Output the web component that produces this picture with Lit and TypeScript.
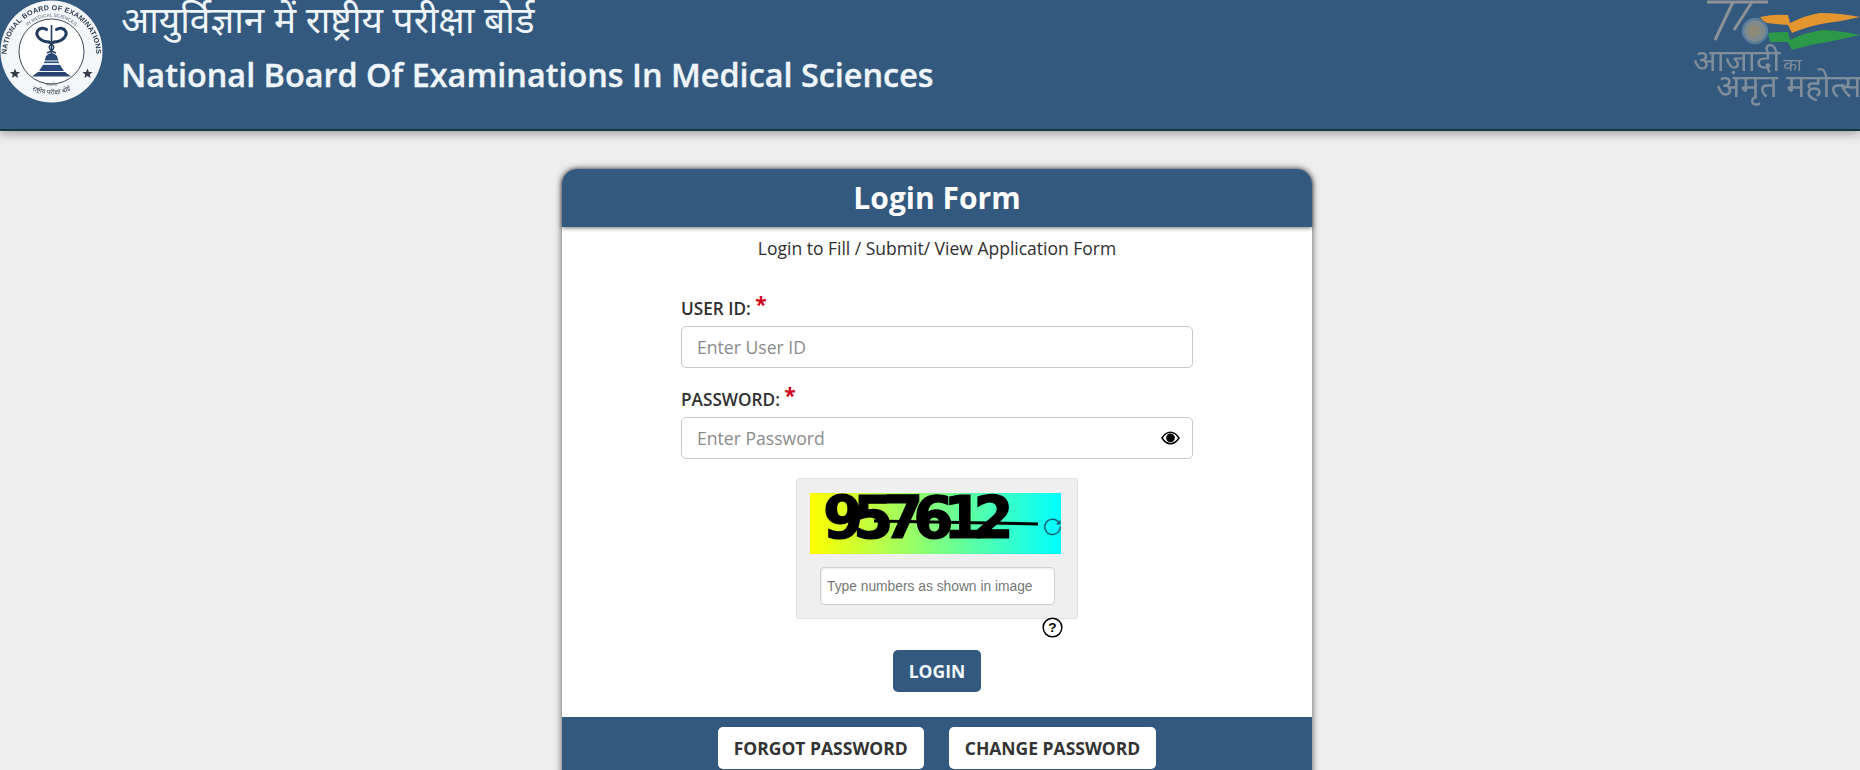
import { LitElement, html, css, svg } from "lit";
import { customElement } from "lit/decorators.js";

const emblem = svg`
<svg class="emblem" viewBox="0 0 104 104" width="104" height="104" aria-hidden="true">
  <defs>
    <path id="arcTop" d="M7 60 A44.8 44.8 0 1 1 96 60"/>
    <path id="arcMid" d="M17.5 42 A35.5 35.5 0 0 1 85.5 42"/>
    <path id="arcBot" d="M19 80 A43.6 43.6 0 0 0 84 80"/>
  </defs>
  <circle cx="51.5" cy="51.5" r="51" fill="#f4f7fa"/>
  <circle cx="51.5" cy="51.5" r="32.5" fill="#fff" stroke="#3c4654" stroke-width="1"/>
  <text font-family="'Liberation Sans',sans-serif" font-size="7.1" font-weight="700" fill="#2c3a4e" letter-spacing=".25"><textPath href="#arcTop" startOffset="50%" text-anchor="middle">NATIONAL BOARD OF EXAMINATIONS</textPath></text>
  <text font-family="'Liberation Sans',sans-serif" font-size="4.7" fill="#5a6575"><textPath href="#arcMid" startOffset="50%" text-anchor="middle">IN MEDICAL SCIENCES</textPath></text>
  <text font-family="'Noto Sans Devanagari','Noto Sans',sans-serif" font-size="6.5" fill="#333d4a"><textPath href="#arcBot" startOffset="50%" text-anchor="middle">राष्ट्रीय परीक्षा बोर्ड</textPath></text>
  <text x="51.5" y="86" text-anchor="middle" font-family="'Noto Sans Devanagari','Noto Sans',sans-serif" font-size="4" fill="#666">सत्यमेव</text>
  <path d="M15 68.5l1.4 3.4 3.7.2-2.9 2.3 1 3.6-3.2-2-3.2 2 1-3.6-2.9-2.3 3.7-.2z" fill="#343c48"/>
  <path d="M87.5 68.5l1.4 3.4 3.7.2-2.9 2.3 1 3.6-3.2-2-3.2 2 1-3.6-2.9-2.3 3.7-.2z" fill="#343c48"/>
  <path d="M49.5 42 C41 42 35 36 37.5 31 C39.5 27.5 44 27.5 46.5 29.5 M53.5 42 C62 42 68 36 65.5 31 C63.5 27.5 59 27.5 56.5 29.5" fill="none" stroke="#223c60" stroke-width="3" stroke-linecap="round"/>
  <path d="M51.5 25 V56" stroke="#223c60" stroke-width="1.6"/>
  <path d="M47 42 C56 45 56 49 47 53 M56 42 C47 45 47 49 56 53" fill="none" stroke="#28405f" stroke-width="1.5"/>
  <path d="M46 56 Q51.5 50 57 56 L59 63 H44 Z" fill="#2b4a7c"/>
  <path d="M44 61 H59" stroke="#f4f7fa" stroke-width="1"/>
  <path d="M44 63 H59 L63 70 H40 Z" fill="#dfe6ef"/>
  <path d="M43 65 H60 L64 71 H39 Z" fill="#294a7d"/>
  <path d="M38 72 H65 L71 76.5 H32 Z" fill="#2a4470"/>
</svg>`;

const azadi = svg`
<svg class="azadi" viewBox="0 0 172 110" width="172" height="110" aria-hidden="true">
  <path d="M19 2 H80 M45 2 L27 40 M64 2 L46 30" fill="none" stroke="#8d9296" stroke-width="3"/>
  <circle cx="67" cy="31" r="12" fill="#7f8a8c" stroke="#5a7d9c" stroke-width="2.5"/>
  <circle cx="66" cy="31" r="6" fill="#8f8a78"/>
  <path d="M72 17 Q86 14 100 15 L102 23 Q118 15 132 13 Q152 13 172 17 Q155 21 139 23 Q120 26 104 33 L100 25 Q88 24 79 23 Q75 21 72 17 Z" fill="#e3962f"/>
  <path d="M80 33 Q90 32 100 32 L102 40 Q118 32 135 30 Q155 31 172 35 Q155 39 139 42 Q120 45 104 50 L100 42 Q90 42 82 42 Z" fill="#2b9947"/>
  <text x="5" y="71" font-family="'Noto Sans Devanagari','Noto Sans',sans-serif" font-size="31" fill="#808e9b">आज़ादी<tspan font-size="18" dx="3">का</tspan></text>
  <text x="28" y="97" font-family="'Noto Sans Devanagari','Noto Sans',sans-serif" font-size="32" fill="#808e9b">अमृत महोत्सव</text>
</svg>`;

const eye = svg`
<svg viewBox="0 0 20 14" width="19" height="14" aria-hidden="true">
  <path d="M1 7 C4 2.5 7 1 10 1 S16 2.5 19 7 C16 11.5 13 13 10 13 S4 11.5 1 7 Z" fill="#fff" stroke="#000" stroke-width="1.5"/>
  <circle cx="10" cy="6.8" r="4.6" fill="#000"/>
</svg>`;

const refresh = svg`
<svg viewBox="0 0 18 18" width="19" height="19" aria-hidden="true">
  <path d="M15.5 6 A7.3 7.3 0 1 0 16.3 9" fill="none" stroke="#1d5f75" stroke-width="1.4"/>
  <path d="M16.6 2.5 L16.6 7.2 L12 7.2 Z" fill="#1d5f75"/>
</svg>`;

const help = svg`
<svg viewBox="0 0 20 20" width="21" height="21" aria-hidden="true">
  <circle cx="10" cy="10" r="8.9" fill="#fff" stroke="#000" stroke-width="1.4"/>
  <text x="10" y="14.6" text-anchor="middle" font-family="'Liberation Sans',sans-serif" font-size="13" font-weight="700" fill="#000">?</text>
</svg>`;

@customElement("app-root")
export class AppRoot extends LitElement {
  static styles = css`
    :host {
      display: block;
      height: 770px;
      overflow: hidden;
      background: #eeeeee;
      font-family: "Open Sans", "Noto Sans", sans-serif;
      color: #2f2f2f;
    }
    .top {
      display: flex;
      height: 129px;
      background: #34597f;
      border-bottom: 2px solid #143a3f;
      box-shadow: 0 3px 9px rgba(0, 0, 0, 0.32);
      overflow: hidden;
    }
    .emblem { flex: none; filter: blur(0.4px); }
    .names {
      flex: 1;
      margin: -2px 0 0 17px;
      color: #eef6fb;
    }
    .hi {
      font-family: "Noto Sans Devanagari", "Noto Sans", sans-serif;
      font-size: 37px;
      line-height: 52px;
      white-space: nowrap;
    }
    .en {
      font-size: 32.4px;
      line-height: 46px;
      font-weight: 600;
      margin-top: 1px;
      white-space: nowrap;
      -webkit-text-stroke: 0.35px #eef6fb;
    }
    .azadi { flex: none; filter: blur(0.5px); }
    .wrap {
      display: flex;
      justify-content: center;
      padding: 38px 0 0 14px;
    }
    .card {
      width: 750px;
      background: #fff;
      border-radius: 15px 15px 0 0;
      box-shadow: 0 0 7px rgba(0, 0, 0, 0.65);
    }
    .card-head {
      height: 58px;
      background: #34597f;
      border-radius: 15px 15px 0 0;
      box-shadow: 0 1px 4px rgba(0, 0, 0, 0.55);
      color: #fff;
      font-size: 30px;
      font-weight: 700;
      line-height: 58px;
      text-align: center;
    }
    .sub {
      font-size: 17.5px;
      line-height: 24px;
      text-align: center;
      padding-top: 9px;
    }
    .form {
      width: 512px;
      margin: 0 auto;
      padding-top: 36px;
    }
    .field { margin-bottom: 19px; }
    .label {
      display: block;
      font-size: 17.2px;
      font-weight: 600;
      line-height: 26px;
      height: 30px;
    }
    .star {
      color: #d0021b;
      font-size: 21px;
      line-height: 0;
      font-weight: 700;
      position: relative;
      top: -3px;
    }
    .box {
      display: flex;
      align-items: center;
      justify-content: space-between;
      box-sizing: border-box;
      height: 42px;
      padding: 0 12px 0 15px;
      background: #fff;
      border: 1px solid #c8c8c8;
      border-radius: 5px;
      font-size: 17.6px;
      color: #8b8b8b;
    }
    .captcha-row {
      display: flex;
      justify-content: center;
    }
    .captcha {
      box-sizing: border-box;
      width: 282px;
      height: 141px;
      padding: 14px 14px 14px 13px;
      background: #efefef;
      border: 1px solid #e2e2e2;
      border-radius: 3px;
    }
    .cimg {
      position: relative;
      height: 61px;
      width: 251px;
      overflow: hidden;
      background: linear-gradient(90deg, #ffff00, #00ffff);
      font-family: "DejaVu Sans", sans-serif;
      font-size: 58px;
      font-weight: 700;
      line-height: 50px;
      letter-spacing: -10.3px;
      color: #000;
      padding-left: 13px;
      box-sizing: border-box;
      -webkit-text-stroke: 1.2px #000;
    }
    .strike {
      position: absolute;
      left: 64px;
      top: 28px;
      width: 164px;
      height: 3px;
      background: #000;
      transform: rotate(1deg);
    }
    .refresh {
      position: absolute;
      right: -1px;
      top: 23px;
      line-height: 0;
    }
    .cinput {
      box-sizing: border-box;
      width: 235px;
      height: 38px;
      margin: 13px 0 0 10px;
      padding-left: 6px;
      display: flex;
      align-items: center;
      background: #fff;
      border: 1px solid #cfcfcf;
      border-radius: 4px;
      box-shadow: inset 1px 1px 2px rgba(0, 0, 0, 0.08);
      font-family: "Liberation Sans", sans-serif;
      font-size: 13.8px;
      color: #777;
    }
    .help-row {
      display: flex;
      justify-content: flex-end;
      width: 293px;
      margin: -2px auto 0;
      height: 21px;
      transform: translateX(-21px);
      line-height: 0;
    }
    .actions {
      display: flex;
      justify-content: center;
      padding-top: 12px;
    }
    .btn {
      box-sizing: border-box;
      height: 42px;
      display: inline-flex;
      align-items: center;
      justify-content: center;
      border-radius: 5px;
      font-size: 17.5px;
      font-weight: 700;
      white-space: nowrap;
    }
    .primary {
      width: 88px;
      background: #34597f;
      color: #f4fbff;
    }
    .foot {
      margin-top: 25px;
      padding: 10px 0;
      background: #34597f;
      display: flex;
      justify-content: center;
      gap: 25px;
    }
    .light {
      background: #fff;
      color: #333;
      padding: 0 16px;
    }
  `;

  render() {
    return html`
      <header class="top">
        ${emblem}
        <div class="names">
          <div class="hi">आयुर्विज्ञान में राष्ट्रीय परीक्षा बोर्ड</div>
          <div class="en">National Board Of Examinations In Medical Sciences</div>
        </div>
        ${azadi}
      </header>
      <main class="wrap">
        <section class="card">
          <div class="card-head">Login Form</div>
          <div class="sub">Login to Fill / Submit/ View Application Form</div>
          <div class="form">
            <div class="field">
              <span class="label">USER ID: <span class="star">*</span></span>
              <div class="box">Enter User ID</div>
            </div>
            <div class="field">
              <span class="label">PASSWORD: <span class="star">*</span></span>
              <div class="box"><span>Enter Password</span>${eye}</div>
            </div>
          </div>
          <div class="captcha-row">
            <div class="captcha">
              <div class="cimg">957612
                <span class="strike"></span>
                <span class="refresh">${refresh}</span>
              </div>
              <div class="cinput">Type numbers as shown in image</div>
            </div>
          </div>
          <div class="help-row">${help}</div>
          <div class="actions"><span class="btn primary">LOGIN</span></div>
          <div class="foot">
            <span class="btn light">FORGOT PASSWORD</span>
            <span class="btn light">CHANGE PASSWORD</span>
          </div>
        </section>
      </main>
    `;
  }
}
